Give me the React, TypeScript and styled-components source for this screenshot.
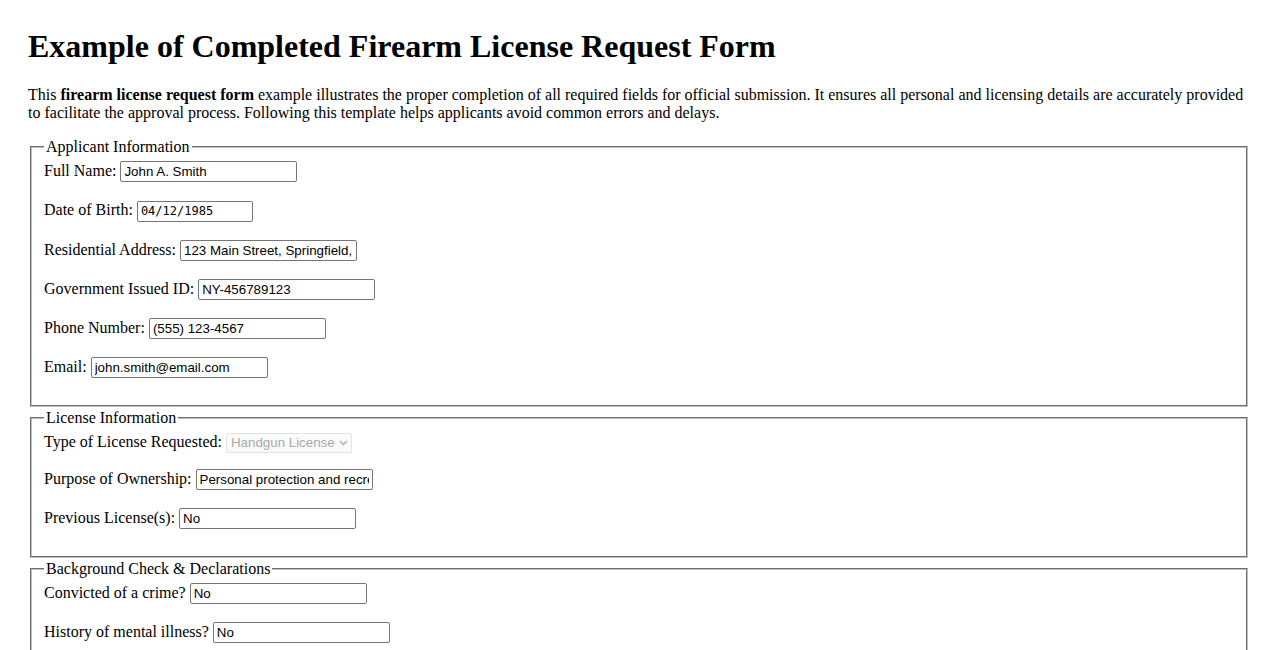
import styled, { createGlobalStyle } from "styled-components";

const GlobalStyle = createGlobalStyle`
  html, body {
    margin: 0;
    background: #fff;
  }
  body {
    padding: 28px;
    font-family: "Liberation Serif", "Times New Roman", serif;
    font-size: 16px;
    color: #000;
  }
`;

const Title = styled.h1`
  font-size: 32px;
  font-weight: bold;
  margin: 0 0 21px;
  line-height: normal;
`;

const Intro = styled.p`
  margin: 0 0 16px;
  line-height: 18px;
`;

const Section = styled.fieldset`
  margin: 0 2px;
  padding: 3px 12px 11px;
  border: 2px groove rgb(192, 192, 192);
  min-width: 0;
  & + & {
    margin-top: 2px;
  }
`;

const Legend = styled.legend`
  padding: 0 2px;
  line-height: 18px;
`;

const Row = styled.div<{ $gap?: number }>`
  margin-bottom: ${(p) => p.$gap ?? 16}px;
  line-height: 23px;
`;

const Label = styled.label`
  margin-right: 4px;
`;

const Field = styled.input<{ $w?: number; $mono?: boolean }>`
  box-sizing: border-box;
  width: ${(p) => p.$w ?? 177}px;
  height: 21px;
  padding: 1px 3px;
  border: 1px solid #767676;
  border-radius: 2px;
  font-family: ${(p) =>
    p.$mono
      ? `"DejaVu Sans Mono", "Liberation Mono", monospace`
      : `"Liberation Sans", Arial, sans-serif`};
  font-size: ${(p) => (p.$mono ? "12px" : "13.33px")};
  color: #000;
  background: #fff;
  vertical-align: baseline;
`;

const Select = styled.div`
  display: inline-flex;
  align-items: center;
  box-sizing: border-box;
  width: 126px;
  height: 20px;
  padding: 0 3px 0 4px;
  border: 1px solid #e3e3e3;
  border-radius: 2px;
  background: #fafafa;
  color: #a9a9a9;
  font-family: "Liberation Sans", Arial, sans-serif;
  font-size: 13.33px;
  line-height: 18px;
  gap: 3px;
  vertical-align: baseline;
  svg {
    flex: none;
  }
`;

const SelectText = styled.span`
  flex: 1;
  white-space: nowrap;
  overflow: hidden;
`;

const Chevron = () => (
  <svg width="9" height="6" viewBox="0 0 9 6">
    <path d="M1 1l3.5 3.5L8 1" fill="none" stroke="#b5b5b5" strokeWidth="1.6" />
  </svg>
);

type Item = { label: string; value: string; mono?: boolean; w?: number };

const applicant: Item[] = [
  { label: "Full Name:", value: "John A. Smith" },
  { label: "Date of Birth:", value: "04/12/1985", mono: true, w: 116 },
  { label: "Residential Address:", value: "123 Main Street, Springfield, IL 62704" },
  { label: "Government Issued ID:", value: "NY-456789123" },
  { label: "Phone Number:", value: "(555) 123-4567" },
  { label: "Email:", value: "john.smith@email.com" },
];

const background: Item[] = [
  { label: "Convicted of a crime?", value: "No" },
  { label: "History of mental illness?", value: "No" },
  { label: "Subject to a restraining order?", value: "No" },
];

const FieldRow = ({ item }: { item: Item }) => (
  <Row>
    <Label>{item.label}</Label>
    <Field type="text" readOnly defaultValue={item.value} $w={item.w} $mono={item.mono} />
  </Row>
);

export default function App() {
  return (
    <>
      <GlobalStyle />
      <Title>Example of Completed Firearm License Request Form</Title>
      <Intro>
        This <b>firearm license request form</b> example illustrates the proper completion of
        all required fields for official submission. It ensures all personal and licensing
        details are accurately provided to facilitate the approval process. Following this
        template helps applicants avoid common errors and delays.
      </Intro>

      <Section>
        <Legend>Applicant Information</Legend>
        {applicant.map((item) => (
          <FieldRow key={item.label} item={item} />
        ))}
      </Section>

      <Section>
        <Legend>License Information</Legend>
        <Row $gap={14}>
          <Label>Type of License Requested:</Label>
          <Select>
            <SelectText>Handgun License</SelectText>
            <Chevron />
          </Select>
        </Row>
        <FieldRow item={{ label: "Purpose of Ownership:", value: "Personal protection and recreational shooting" }} />
        <FieldRow item={{ label: "Previous License(s):", value: "No" }} />
      </Section>

      <Section>
        <Legend>Background Check &amp; Declarations</Legend>
        {background.map((item) => (
          <FieldRow key={item.label} item={item} />
        ))}
      </Section>
    </>
  );
}
